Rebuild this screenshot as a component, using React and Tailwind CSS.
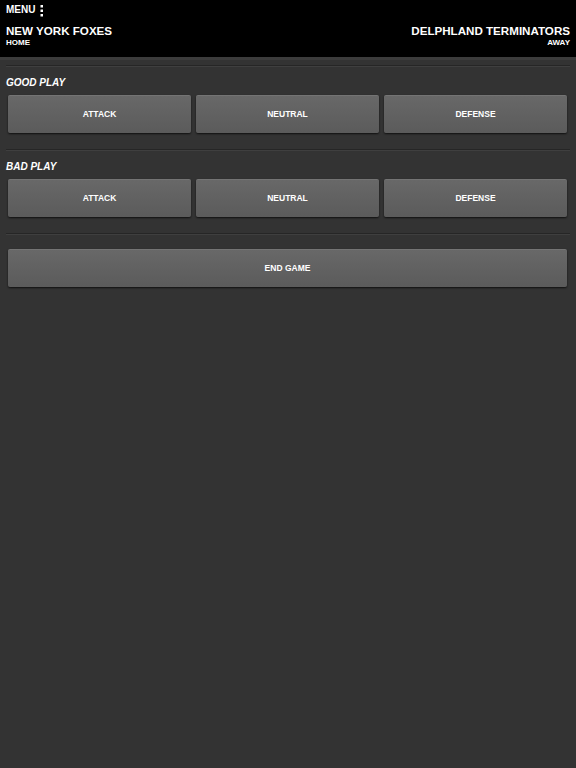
import React from 'react';

const font = { fontFamily: '"Liberation Sans", Arial, sans-serif' };

function PlayButton({ label, wide }) {
  return (
    <button
      className={`${wide ? 'w-full' : 'flex-1'} h-[38px] rounded-[2px] border-t border-[#747474] bg-gradient-to-b from-[#686868] to-[#5b5b5b] text-white text-[8.5px] font-bold shadow-[0_1px_2px_rgba(0,0,0,0.7)]`}
    >
      {label}
    </button>
  );
}

function Divider({ className = '' }) {
  return <div className={`h-[2px] border-t border-[#262626] border-b border-b-[#3f3f3f] ${className}`} />;
}

function Section({ title, first }) {
  return (
    <div>
      <Divider className={first ? 'mt-[5px]' : 'mt-[16px]'} />
      <div className="mt-[9px] h-[14px] leading-[14px] text-[10px] font-bold italic text-white">{title}</div>
      <div className="mt-[5px] flex gap-[5px] pl-[2px] pr-[3px]">
        <PlayButton label="ATTACK" />
        <PlayButton label="NEUTRAL" />
        <PlayButton label="DEFENSE" />
      </div>
    </div>
  );
}

export default function App() {
  return (
    <div className="w-[576px] h-[768px] bg-[#333333] text-white" style={font}>
      <div className="h-[57px] bg-black px-[6px] flex flex-col">
        <div className="h-[20px] flex items-center gap-[5px]">
          <span className="text-[10px] font-bold leading-none">MENU</span>
          <svg width="4" height="12" viewBox="0 0 4 12" className="mt-[1px]">
            <rect x="0.5" y="0" width="2.5" height="2.5" fill="white" />
            <rect x="0.5" y="4.5" width="2.5" height="2.5" fill="white" />
            <rect x="0.5" y="9" width="2.5" height="2.5" fill="white" />
          </svg>
        </div>
        <div className="mt-[4px] flex justify-between">
          <div>
            <div className="text-[11.6px] font-bold leading-[14px]">NEW YORK FOXES</div>
            <div className="text-[8px] font-bold leading-[9px]">HOME</div>
          </div>
          <div className="text-right">
            <div className="text-[11.6px] font-bold leading-[14px]">DELPHLAND TERMINATORS</div>
            <div className="text-[8px] font-bold leading-[9px]">AWAY</div>
          </div>
        </div>
      </div>
      <div className="h-[3px] bg-[#3c3c3c]" />
      <div className="px-[6px]">
        <Section title="GOOD PLAY" first />
        <Section title="BAD PLAY" />
        <Divider className="mt-[16px]" />
        <div className="mt-[14px] pl-[2px] pr-[3px]">
          <PlayButton label="END GAME" wide />
        </div>
      </div>
    </div>
  );
}
